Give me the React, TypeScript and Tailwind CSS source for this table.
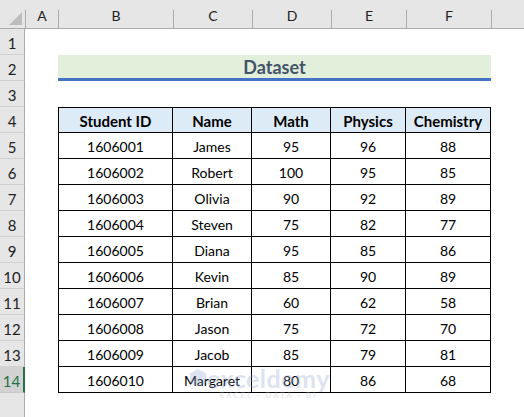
import React from "react";

type Student = {
  id: string;
  name: string;
  math: number;
  physics: number;
  chemistry: number;
};

const students: Student[] = [
  { id: "1606001", name: "James", math: 95, physics: 96, chemistry: 88 },
  { id: "1606002", name: "Robert", math: 100, physics: 95, chemistry: 85 },
  { id: "1606003", name: "Olivia", math: 90, physics: 92, chemistry: 89 },
  { id: "1606004", name: "Steven", math: 75, physics: 82, chemistry: 77 },
  { id: "1606005", name: "Diana", math: 95, physics: 85, chemistry: 86 },
  { id: "1606006", name: "Kevin", math: 85, physics: 90, chemistry: 89 },
  { id: "1606007", name: "Brian", math: 60, physics: 62, chemistry: 58 },
  { id: "1606008", name: "Jason", math: 75, physics: 72, chemistry: 70 },
  { id: "1606009", name: "Jacob", math: 85, physics: 79, chemistry: 81 },
  { id: "1606010", name: "Margaret", math: 80, physics: 86, chemistry: 68 },
];

const columns = [
  { label: "A", w: "w-[33px]" },
  { label: "B", w: "w-[115px]" },
  { label: "C", w: "w-[79px]" },
  { label: "D", w: "w-[79px]" },
  { label: "E", w: "w-[75px]" },
  { label: "F", w: "w-[85px]" },
];

const RowHead: React.FC<{ n?: number; selected?: boolean }> = ({ n, selected }) => (
  <div
    className={
      selected
        ? "w-[25px] shrink-0 h-full flex items-center justify-center bg-[#d2d2d2] text-[#217346] border-r-2 border-[#217346] border-b border-b-[#c8c8c8]"
        : "w-[25px] shrink-0 h-full flex items-center justify-center bg-[#e6e6e6] text-[#222] border-r border-[#ababab] border-b border-b-[#d0d0d0]"
    }
  >
    <span className="text-[15px] pt-[4px]">{n}</span>
  </div>
);

const cell = "h-full flex items-center justify-center border-r border-b border-black pt-[2px]";

const App: React.FC = () => {
  return (
    <div
      className="relative w-[524px] h-[417px] bg-white overflow-hidden"
      style={{ fontFamily: "Lato, 'Liberation Sans', sans-serif" }}
    >
      {/* column letters */}
      <div className="flex h-[29px] bg-[#e6e6e6] border-b border-[#ababab]">
        <div className="w-[25px] shrink-0 relative">
          <div
            className="absolute right-[3px] bottom-[3px] w-[13px] h-[13px] bg-[#bdbdbd]"
            style={{ clipPath: "polygon(100% 0, 100% 100%, 0 100%)" }}
          />
        </div>
        {columns.map((c) => (
          <div key={c.label} className={`${c.w} shrink-0 flex items-end border-l border-[#ababab] mt-[10px]`}>
            <div className="w-full text-center text-[14px] text-[#222] pb-[2px]">{c.label}</div>
          </div>
        ))}
        <div className="flex-1 border-l border-[#ababab] mt-[10px]" />
      </div>

      {/* row 1 */}
      <div className="flex h-[26px]">
        <RowHead n={1} />
      </div>

      {/* row 2 */}
      <div className="flex h-[26px]">
        <RowHead n={2} />
        <div className="w-[33px] shrink-0" />
        <div className="w-[433px] shrink-0 h-full bg-[#e2efda] border-b-[3px] border-[#4472c4] flex items-center justify-center">
          <span className="text-[18px] font-bold text-[#44546a] pt-[2px]">Dataset</span>
        </div>
      </div>

      {/* row 3 */}
      <div className="flex h-[26px]">
        <RowHead n={3} />
      </div>

      {/* row 4 - table header */}
      <div className="flex h-[26px]">
        <RowHead n={4} />
        <div className="w-[33px] shrink-0" />
        <div className="flex h-full border-t border-l border-black bg-[#ddebf7] font-bold text-[15px] text-black">
          <div className={`w-[114px] ${cell}`}>Student ID</div>
          <div className={`w-[79px] ${cell}`}>Name</div>
          <div className={`w-[79px] ${cell}`}>Math</div>
          <div className={`w-[75px] ${cell}`}>Physics</div>
          <div className={`w-[85px] ${cell}`}>Chemistry</div>
        </div>
      </div>

      {students.map((s, i) => (
        <div key={s.id} className="flex h-[26px]">
          <RowHead n={i + 5} selected={i === students.length - 1} />
          <div className="w-[33px] shrink-0" />
          <div className="flex h-full border-l border-black text-[14px] text-black">
            <div className={`w-[114px] ${cell}`}>{s.id}</div>
            <div className={`w-[79px] ${cell}`}>{s.name}</div>
            <div className={`w-[79px] ${cell}`}>{s.math}</div>
            <div className={`w-[75px] ${cell}`}>{s.physics}</div>
            <div className={`w-[85px] ${cell}`}>{s.chemistry}</div>
          </div>
        </div>
      ))}

      {/* empty area below */}
      <div className="flex h-[30px]">
        <div className="w-[25px] shrink-0 h-full bg-[#e6e6e6] border-r border-[#ababab]" />
      </div>

      {/* watermark */}
      <div className="absolute left-[190px] top-[367px] flex items-start opacity-30 pointer-events-none">
        <svg width="16" height="18" viewBox="0 0 16 18" className="mt-[2px]">
          <polygon points="8,0 16,4.5 16,13.5 8,18 0,13.5 0,4.5" fill="#8ea3cf" />
        </svg>
        <div className="flex flex-col items-center ml-[1px]">
          <span className="text-[25px] leading-[22px] font-bold text-[#8ea3cf] tracking-[0.5px]">exceldemy</span>
          <span className="text-[8px] leading-[10px] font-bold text-[#a9b2c0] tracking-[2px] mt-[1px]">EXCEL · DATA · BI</span>
        </div>
      </div>
    </div>
  );
};

export default App;
